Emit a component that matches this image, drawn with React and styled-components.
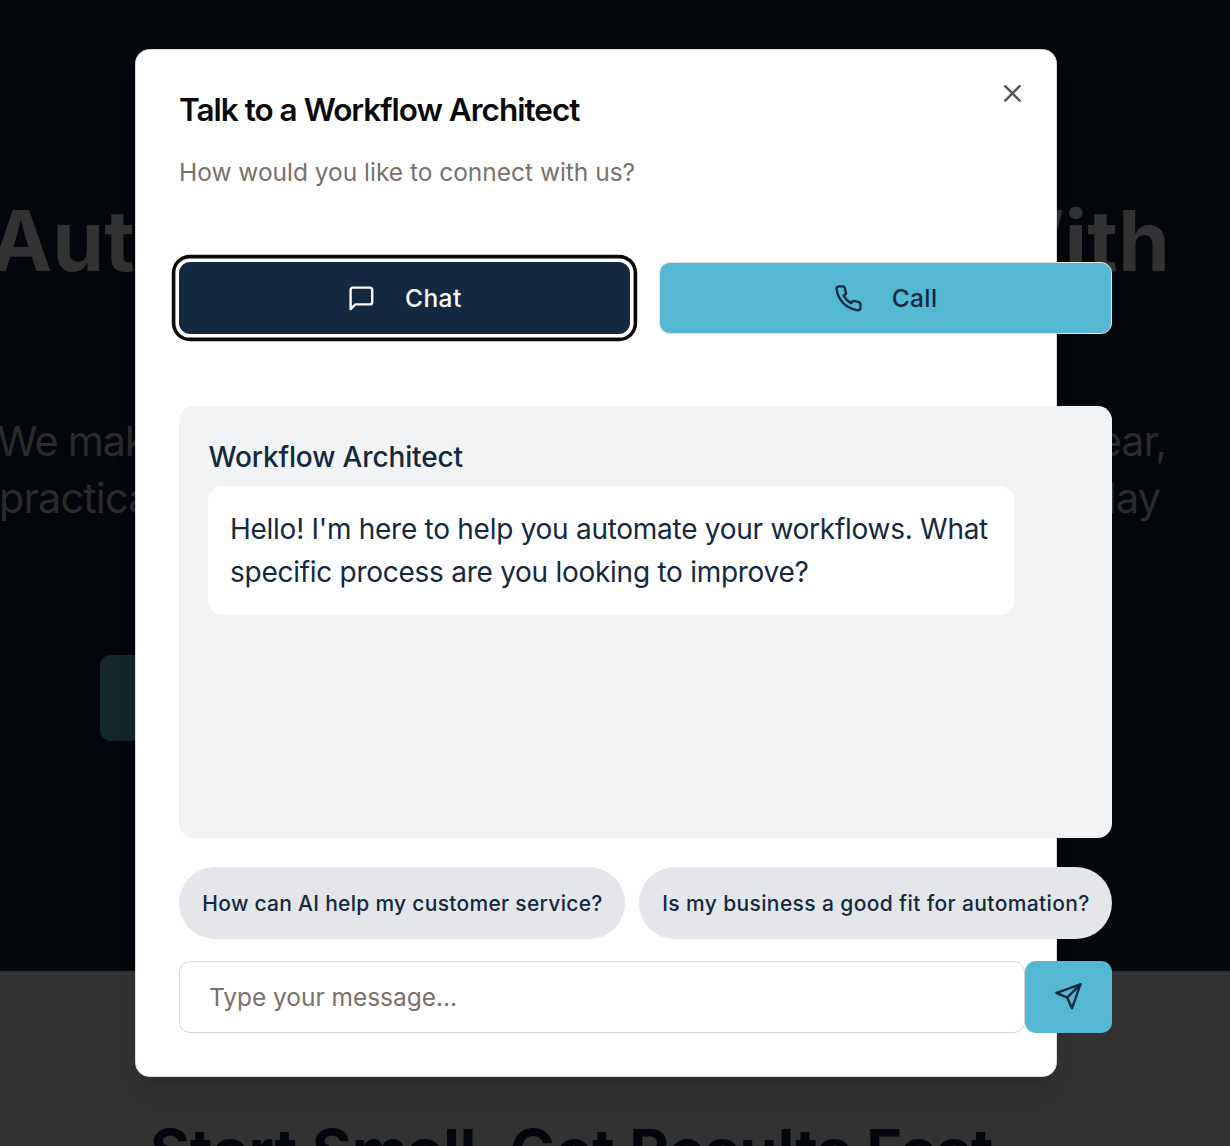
import React from 'react';
import styled, { createGlobalStyle } from 'styled-components';

const navy = '#14293f';
const cyan = '#55b8d2';

const GlobalStyle = createGlobalStyle`
  *, *::before, *::after { box-sizing: border-box; }
  html, body { margin: 0; padding: 0; overflow: hidden; }
  body { font-family: Inter, "Liberation Sans", sans-serif; background: #323232; }
  h1, h2, p { margin: 0; }
  button, input { font-family: inherit; }
`;

const Page = styled.div`
  position: relative;
  height: 1146px;
  overflow: hidden;
`;

const Hero = styled.section`
  height: 971px;
  padding: 199px 60px 0 0;
  background: #03060b;
`;

const HeroTitle = styled.h1`
  display: flex;
  justify-content: space-between;
  margin-left: -10px;
  font-size: 83.5px;
  font-weight: 700;
  line-height: 84px;
  color: #323232;
  white-space: nowrap;
`;

const Word = styled.span`
  letter-spacing: ${(p) => p.$tracking || '0'};
`;

const HeroCopy = styled.div`
  margin: 129.5px 0 0;
  font-size: 41.2px;
  line-height: 57.6px;
  color: #2b2b2c;
`;

const CopyLine = styled.p`
  display: flex;
  justify-content: space-between;
  margin: 0 ${(p) => p.$right}px 0 ${(p) => p.$left}px;
  letter-spacing: ${(p) => p.$tracking};
  white-space: nowrap;
`;

const HeroAction = styled.button`
  display: block;
  width: 380px;
  height: 86px;
  margin: 127px 0 0 100px;
  border: 0;
  border-radius: 10.8px;
  background: linear-gradient(90deg, #13272c, #0f1f24);
`;

const NextSection = styled.section`
  height: 175px;
  padding: 144px 0 0 150px;
  overflow: hidden;
  background: #323232;
`;

const NextTitle = styled.h2`
  font-size: 61px;
  font-weight: 700;
  line-height: 72px;
  letter-spacing: 0.15px;
  color: #03060b;
  white-space: nowrap;
`;

const Dialog = styled.div`
  position: absolute;
  top: 49px;
  left: 135px;
  display: flex;
  flex-direction: column;
  width: 922px;
  height: 1028px;
  padding: 43px;
  border: 1px solid #dcdcdc;
  border-radius: 14.4px;
  background: #fff;
  box-shadow: 0 18px 27px -5.4px rgba(0, 0, 0, 0.1), 0 7.2px 10.8px -7.2px rgba(0, 0, 0, 0.1);
`;

const Title = styled.h2`
  font-size: 31.5px;
  font-weight: 600;
  line-height: 33px;
  letter-spacing: -1px;
  color: #0a0a0a;
`;

const Description = styled.p`
  margin: 28px 0 72px;
  font-size: 24.5px;
  line-height: 36px;
  letter-spacing: -0.02px;
  color: #78716c;
`;

const CloseButton = styled.button`
  position: absolute;
  top: 29px;
  right: 29px;
  display: flex;
  padding: 0;
  border: 0;
  background: none;
  color: #545454;
`;

const Body = styled.div`
  display: flex;
  flex-direction: column;
  flex: none;
  width: 933px;
`;

const Choices = styled.div`
  display: grid;
  grid-template-columns: 451px 1fr;
  gap: 29.3px;
`;

const Choice = styled.button`
  display: flex;
  align-items: center;
  justify-content: center;
  gap: 29px;
  height: 72px;
  padding: 0;
  border: 1px solid ${(p) => (p.$active ? navy : '#e7e5e4')};
  border-radius: 10.8px;
  background: ${(p) => (p.$active ? navy : cyan)};
  box-shadow: ${(p) => (p.$active ? '0 0 0 3.6px #fff, 0 0 0 7.2px #0a0a0a' : 'none')};
  color: ${(p) => (p.$active ? '#fafaf9' : navy)};
  font-size: 24.5px;
  font-weight: 500;
  letter-spacing: 0.4px;
`;

const Panel = styled.div`
  height: 432px;
  margin-top: 72px;
  padding: 30px 29px 29px;
  border-radius: 14.4px;
  background: #f2f3f5;
  color: ${navy};
`;

const Sender = styled.p`
  padding-left: 0.5px;
  font-size: 28px;
  font-weight: 500;
  line-height: 43px;
  letter-spacing: -0.14px;
`;

const Bubble = styled.p`
  width: 806px;
  margin-top: 7px;
  padding: 21.5px 20px 21.5px 22px;
  border-radius: 14.4px;
  background: #fff;
  font-size: 28px;
  line-height: 43px;
  letter-spacing: -0.27px;
`;

const Chips = styled.div`
  display: grid;
  grid-template-columns: 446px 1fr;
  gap: 14px;
  margin-top: 29px;
`;

const Chip = styled.button`
  height: 72px;
  padding: 0 0 0 1px;
  border: 0;
  border-radius: 36px;
  background: #e5e6ea;
  color: ${navy};
  font-size: 21px;
  font-weight: 500;
  letter-spacing: ${(p) => p.$tracking};
  white-space: nowrap;
`;

const Composer = styled.form`
  display: flex;
  margin-top: 22px;
`;

const MessageInput = styled.input`
  flex: 1;
  min-width: 0;
  height: 72px;
  padding: 0 29px;
  border: 1px solid #d2d4da;
  border-radius: 10.8px;
  background: #fff;
  font-size: 24.5px;
  letter-spacing: -0.03px;
  outline: none;
  &::placeholder { color: #78716c; opacity: 1; }
`;

const SendButton = styled.button`
  display: flex;
  align-items: center;
  justify-content: center;
  width: 87px;
  height: 72px;
  padding: 0 0 1px;
  border: 0;
  border-radius: 10.8px;
  background: ${cyan};
  color: ${navy};
`;

const Icon = styled.svg.attrs({ viewBox: '0 0 24 24', 'aria-hidden': true })`
  width: 28.8px;
  height: 28.8px;
  flex: none;
  fill: none;
  stroke: currentColor;
  stroke-width: 2;
  stroke-linecap: round;
  stroke-linejoin: round;
`;

export default function App() {
  return (
    <Page>
      <GlobalStyle />
      <Hero>
        <HeroTitle>
          <Word>Automate</Word>
          <Word>With</Word>
        </HeroTitle>
        <HeroCopy>
          <CopyLine $left={-3} $right={4} $tracking="-1.1px"><span>We make</span><span>clear,</span></CopyLine>
          <CopyLine $left={-1} $right={10} $tracking="-0.8px"><span>practical</span><span>today</span></CopyLine>
        </HeroCopy>
        <HeroAction aria-label="Get started" />
      </Hero>
      <NextSection>
        <NextTitle>Start Small. Get Results Fast.</NextTitle>
      </NextSection>

      <Dialog role="dialog">
        <Title>Talk to a Workflow Architect</Title>
        <Description>How would you like to connect with us?</Description>
        <Body>
          <Choices>
            <Choice $active>
              <Icon><path d="M21 15a2 2 0 0 1-2 2H7l-4 4V5a2 2 0 0 1 2-2h14a2 2 0 0 1 2 2z" /></Icon>
              Chat
            </Choice>
            <Choice>
              <Icon><path d="M22 16.92v3a2 2 0 0 1-2.18 2 19.79 19.79 0 0 1-8.63-3.07 19.5 19.5 0 0 1-6-6 19.79 19.79 0 0 1-3.07-8.67A2 2 0 0 1 4.11 2h3a2 2 0 0 1 2 1.72 12.84 12.84 0 0 0 .7 2.81 2 2 0 0 1-.45 2.11L8.09 9.91a16 16 0 0 0 6 6l1.27-1.27a2 2 0 0 1 2.11-.45 12.84 12.84 0 0 0 2.81.7A2 2 0 0 1 22 16.92z" /></Icon>
              Call
            </Choice>
          </Choices>
          <Panel>
            <Sender>Workflow Architect</Sender>
            <Bubble>Hello! I'm here to help you automate your workflows. What specific process are you looking to improve?</Bubble>
          </Panel>
          <Chips>
            <Chip $tracking="0.29px">How can AI help my customer service?</Chip>
            <Chip $tracking="0.38px">Is my business a good fit for automation?</Chip>
          </Chips>
          <Composer>
            <MessageInput placeholder="Type your message..." />
            <SendButton type="button" aria-label="Send">
              <Icon><path d="m22 2-7 20-4-9-9-4Z" /><path d="M22 2 11 13" /></Icon>
            </SendButton>
          </Composer>
        </Body>
        <CloseButton aria-label="Close">
          <Icon><path d="M18 6 6 18" /><path d="m6 6 12 12" /></Icon>
        </CloseButton>
      </Dialog>
    </Page>
  );
}
